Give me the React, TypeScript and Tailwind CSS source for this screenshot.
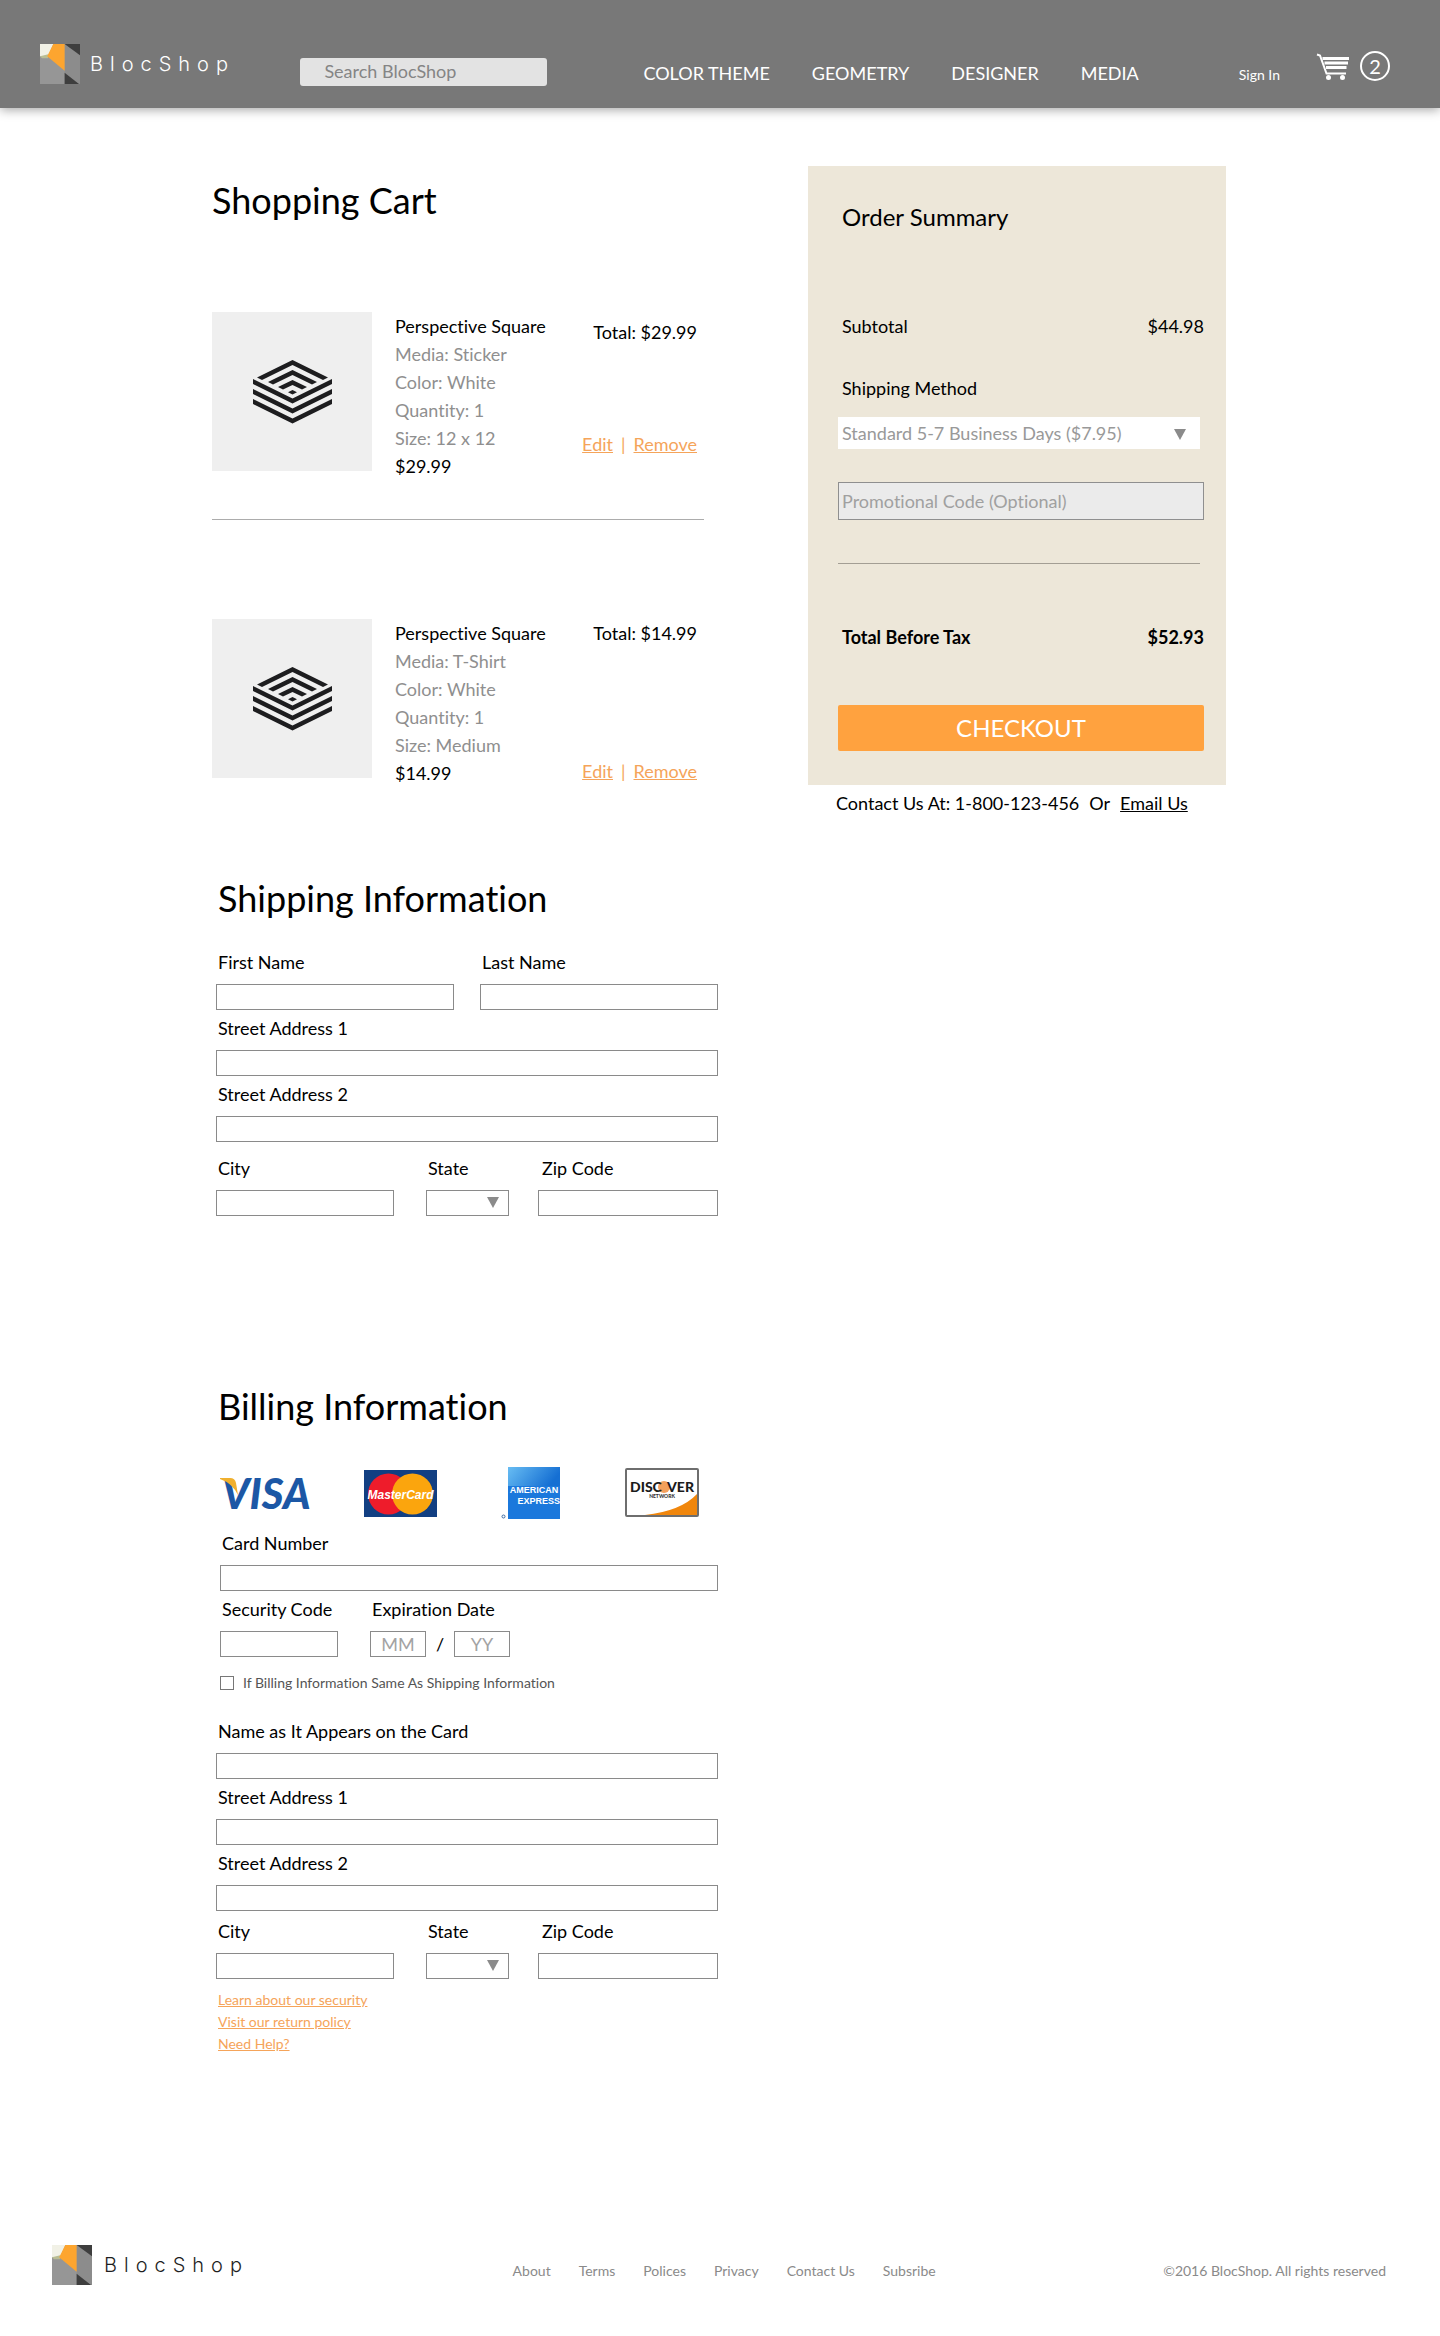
import type { ReactNode } from "react";

const fieldBox =
  "block h-[26px] w-full min-w-0 border border-[#8a8a8a] bg-white px-1 text-[18px] text-black outline-none";

function LogoMark() {
  return (
    <svg viewBox="0 0 39 39" className="h-10 w-10 shrink-0" aria-hidden="true">
      <rect width="39" height="39" fill="#969696" />
      <rect x="24" width="15" height="39" fill="#8c8c8c" />
      <polygon points="0,0 13,0 8,12 0,12" fill="#f1f1e6" />
      <polygon points="0,12 8,10 8,14 2,14" fill="#b9bd94" />
      <polygon points="13,0 24,0 24,26 7,12" fill="#fda52f" />
      <polygon points="24,0 39,0 39,11" fill="#3e3e3e" />
      <polygon points="24,28 38,39 24,39" fill="#3e3e3e" />
    </svg>
  );
}

function CartIcon() {
  return (
    <svg viewBox="0 0 34 27" className="h-[27px] w-[34px]" fill="none" aria-hidden="true">
      <path d="M1 1.5 L4 2.5 L10.5 20.5 H30" stroke="#fff" strokeWidth="2" />
      <path d="M6.500 5.500H33M8.500 10H32M10 14.500H30.500" stroke="#fff" strokeWidth="3" />
      <circle cx="12.500" cy="24.500" r="2.500" fill="#fff" />
      <circle cx="26.500" cy="24.500" r="2.500" fill="#fff" />
    </svg>
  );
}

function PerspectiveSquare() {
  return (
    <svg viewBox="0 0 79 64" className="h-16 w-[79px]" fill="#1d1d1f" aria-hidden="true">
      <polygon points="39.5,0 75,17.5 70,20 39.5,5 9,20 4,17.5" />
      <polygon points="39.5,10 64,22 59,24.5 39.5,15 20,24.5 15,22" />
      <polygon points="39.5,20 54,27 49,29.5 39.5,25 30,29.5 25,27" />
      <polygon points="39.5,30 44,32.3 39.5,34.6 35,32.3" />
      <polygon points="0,19 39.5,38.5 79,19 79,24 39.5,43.5 0,24" />
      <polygon points="0,29 39.5,48.5 79,29 79,34 39.5,53.5 0,34" />
      <polygon points="0,39 39.5,58.5 79,39 79,44 39.5,63.5 0,44" />
    </svg>
  );
}

function Arrow({ className }: { className: string }) {
  return (
    <svg viewBox="0 0 12 11" className={`pointer-events-none absolute h-[11px] w-3 ${className}`} aria-hidden="true">
      <polygon points="0,0 12,0 6,11" fill="#8b8b8b" />
    </svg>
  );
}

function CartItem(props: {
  media: string;
  size: string;
  price: string;
  rowClass: string;
  sideClass: string;
}) {
  return (
    <li className={`flex w-full max-w-[492px] ${props.rowClass}`}>
      <div className="flex h-[159px] w-40 shrink-0 items-center justify-center bg-[#efefef]">
        <PerspectiveSquare />
      </div>
      <div className="ml-[23px] flex-1 text-[#8f8f8f]">
        <h3 className="text-black">Perspective Square</h3>
        <p>Media: {props.media}</p>
        <p>Color: White</p>
        <p>Quantity: 1</p>
        <p>Size: {props.size}</p>
        <p className="text-black">{props.price}</p>
      </div>
      <div className={`mr-[7px] flex flex-col items-end justify-between ${props.sideClass}`}>
        <p>Total: {props.price}</p>
        <p className="flex gap-2 text-[#f5a45a]">
          <a href="#edit" className="underline">Edit</a>
          <span>|</span>
          <a href="#remove" className="underline">Remove</a>
        </p>
      </div>
    </li>
  );
}

function Field({ id, label, className = "" }: { id: string; label: string; className?: string }) {
  return (
    <div className={`flex flex-col gap-2 ${className}`}>
      <label htmlFor={id} className="pl-0.5">{label}</label>
      <input id={id} type="text" className={fieldBox} />
    </div>
  );
}

function CityRow({ prefix, className }: { prefix: string; className: string }) {
  return (
    <div className={`flex ${className}`}>
      <Field id={`${prefix}-city`} label="City" className="mr-8 w-[178px]" />
      <div className="mr-[29px] flex w-[83px] flex-col gap-2">
        <label htmlFor={`${prefix}-state`} className="pl-0.5">State</label>
        <div className="relative">
          <select id={`${prefix}-state`} className={`${fieldBox} appearance-none`}>
            <option value=""></option>
            <option>CA</option>
            <option>NY</option>
          </select>
          <Arrow className="right-2.5 top-[7px]" />
        </div>
      </div>
      <div className="flex flex-1 flex-col gap-2">
        <label htmlFor={`${prefix}-zip`} className="pl-1">Zip Code</label>
        <input id={`${prefix}-zip`} type="text" className={fieldBox} />
      </div>
    </div>
  );
}

function Visa() {
  return (
    <svg viewBox="0 0 98 52" className="h-[52px] w-[98px] shrink-0" role="img" aria-label="Visa">
      <text x="2" y="42" fontFamily="Lato, sans-serif" fontSize="42" fontWeight="900" fontStyle="italic" fill="#1c57a5">VISA</text>
      <path d="M0 11 H10 Q15 11 16 16 L18 28 Q12 16 0 12 Z" fill="#f0b02e" />
    </svg>
  );
}

function MasterCard() {
  return (
    <svg viewBox="0 0 73 52" className="h-[52px] w-[73px] shrink-0" role="img" aria-label="MasterCard">
      <rect y="3" width="73" height="47" fill="#123f82" />
      <circle cx="24.500" cy="27" r="20.500" fill="#ee1c2b" />
      <circle cx="48.500" cy="27" r="20.500" fill="#fba50d" />
      <text x="36.500" y="32" textAnchor="middle" fontFamily="Liberation Sans, sans-serif" fontSize="12" fontWeight="700" fontStyle="italic" fill="#fff">MasterCard</text>
    </svg>
  );
}

function Amex() {
  return (
    <svg viewBox="0 0 60 52" className="h-[52px] w-[60px] shrink-0" role="img" aria-label="American Express">
      <defs>
        <linearGradient id="amex-fill" x1="0" y1="0" x2="1" y2="0.3">
          <stop offset="0" stopColor="#68bdf3" />
          <stop offset="1" stopColor="#156fd3" />
        </linearGradient>
      </defs>
      <rect x="7" width="52" height="52" fill="#1b78dc" />
      <rect x="7" width="52" height="19" fill="url(#amex-fill)" />
      <text x="33" y="26" textAnchor="middle" fontFamily="Liberation Sans, sans-serif" fontSize="9" fontWeight="700" fill="#fff">AMERICAN</text>
      <text x="59" y="37" textAnchor="end" fontFamily="Liberation Sans, sans-serif" fontSize="9" fontWeight="700" fill="#fff">EXPRESS</text>
      <circle cx="2.500" cy="49.500" r="1.500" fill="none" stroke="#3c6aa0" />
    </svg>
  );
}

function Discover() {
  return (
    <svg viewBox="0 0 74 52" className="h-[52px] w-[74px] shrink-0" role="img" aria-label="Discover Network">
      <rect x="1" y="2" width="72" height="47" rx="1" fill="#fff" stroke="#6e6e6e" strokeWidth="2" />
      <path d="M20 48 Q56 44 72 27 V48 Z" fill="#f0860c" />
      <circle cx="39" cy="20" r="6" fill="#f3a05c" />
      <text x="5" y="25" fontFamily="Lato, sans-serif" fontSize="14" fontWeight="900" fill="#1b1b1b">DISC</text>
      <text x="69" y="25" textAnchor="end" fontFamily="Lato, sans-serif" fontSize="14" fontWeight="900" fill="#1b1b1b">VER</text>
      <text x="37" y="31" textAnchor="middle" fontFamily="Lato, sans-serif" fontSize="5" fontWeight="900" fill="#333">NETWORK</text>
    </svg>
  );
}

function SectionTitle({ children, className = "" }: { children: ReactNode; className?: string }) {
  return <h2 className={`pl-1.5 text-[36px] leading-[44px] ${className}`}>{children}</h2>;
}

export default function App() {
  return (
    <div className="min-h-screen bg-white font-['Lato',sans-serif] text-[18px] leading-7 text-black [font-variant-ligatures:none]">
      <header className="flex h-[108px] items-center bg-[#787878] pl-10 pr-[50px] pt-5 text-white shadow-[0_2px_10px_rgba(0,0,0,0.35)]">
        <a href="#home" className="flex items-center gap-2.5">
          <LogoMark />
          <span className="font-['Inter',sans-serif] text-[20px] font-light tracking-[7px]">BlocShop</span>
        </a>
        <input
          type="search"
          aria-label="Search BlocShop"
          placeholder="Search BlocShop"
          className="ml-auto mt-4 h-7 w-[247px] rounded-[3px] bg-[#e3e3e3] pb-0.5 pl-6 text-[18px] leading-[26px] text-black outline-none placeholder:text-[#858585]"
        />
        <nav className="ml-24 mt-[18px] flex gap-[42px]">
          <a href="#color">COLOR THEME</a>
          <a href="#geometry">GEOMETRY</a>
          <a href="#designer">DESIGNER</a>
          <a href="#media">MEDIA</a>
        </nav>
        <a href="#sign-in" className="ml-[100px] mt-[22px] text-[14px]">Sign In</a>
        <a href="#cart" aria-label="Cart, 2 items" className="ml-9 mt-1 flex items-center gap-2.5">
          <CartIcon />
          <span className="flex h-[30px] w-[30px] items-center justify-center rounded-full border-2 border-white text-[20px]">2</span>
        </a>
      </header>

      <main className="mx-auto flex max-w-[1016px] items-start gap-[90px] pt-[58px]">
        <div className="w-full max-w-[506px]">
          <h1 className="mt-3 text-[36px] leading-[44px]">Shopping Cart</h1>
          <ul className="mt-[90px]">
            <CartItem media="Sticker" size="12 x 12" price="$29.99" rowClass="border-b border-[#acacac] pb-[39px]" sideClass="pt-1.5 pb-[22px]" />
            <CartItem media="T-Shirt" size="Medium" price="$14.99" rowClass="pt-[99px]" sideClass="pb-0.5" />
          </ul>

          <form>
            <SectionTitle className="mt-[89px]">Shipping Information</SectionTitle>
            <div className="mt-7 flex flex-col gap-1 pl-1">
              <div className="flex gap-[26px]">
                <Field id="first-name" label="First Name" className="flex-1" />
                <Field id="last-name" label="Last Name" className="flex-1" />
              </div>
              <Field id="ship-street-1" label="Street Address 1" />
              <Field id="ship-street-2" label="Street Address 2" />
              <CityRow prefix="ship" className="mt-2" />
            </div>

            <SectionTitle className="mt-[168px]">Billing Information</SectionTitle>
            <div className="mt-[39px] flex gap-16 pl-2">
              <div className="flex gap-[46px]">
                <Visa />
                <MasterCard />
              </div>
              <Amex />
              <Discover />
            </div>
            <div className="mt-2.5 flex flex-col gap-1 pl-2">
              <Field id="card-number" label="Card Number" />
              <div className="flex">
                <Field id="security-code" label="Security Code" className="mr-8 w-[118px]" />
                <div className="flex flex-col gap-2">
                  <label htmlFor="exp-month" className="pl-0.5">Expiration Date</label>
                  <div className="flex h-[26px] items-center">
                    <input id="exp-month" type="text" placeholder="MM" className="h-[26px] w-14 border border-[#8a8a8a] text-center placeholder:text-[#a3a3a3]" />
                    <span className="w-7 text-center">/</span>
                    <input aria-label="Expiration year" type="text" placeholder="YY" className="h-[26px] w-14 border border-[#8a8a8a] text-center placeholder:text-[#a3a3a3]" />
                  </div>
                </div>
              </div>
            </div>
            <label className="mt-4 flex h-5 items-center gap-[9px] pl-2 text-[14px] leading-5 text-[#555]">
              <input type="checkbox" className="h-3.5 w-3.5 appearance-none border border-[#777] bg-white checked:bg-[#777]" />
              If Billing Information Same As Shipping Information
            </label>
            <div className="mt-6 flex flex-col gap-1 pl-1">
              <Field id="card-name" label="Name as It Appears on the Card" />
              <Field id="bill-street-1" label="Street Address 1" />
              <Field id="bill-street-2" label="Street Address 2" />
              <CityRow prefix="bill" className="mt-0.5" />
            </div>
          </form>
          <ul className="mt-2.5 pl-1.5 text-[14px] leading-[22px] text-[#f5a45a]">
            <li><a href="#security" className="underline">Learn about our security</a></li>
            <li><a href="#returns" className="underline">Visit our return policy</a></li>
            <li><a href="#help" className="underline">Need Help?</a></li>
          </ul>
        </div>

        <aside className="w-[418px] shrink-0">
          <div className="bg-[#ede7d9] pb-[34px] pl-[30px] pr-[22px] pt-[35px]">
            <h2 className="pl-1 text-[24px] leading-8">Order Summary</h2>
            <p className="mt-[79px] flex justify-between pl-1"><span>Subtotal</span><span>$44.98</span></p>
            <label htmlFor="shipping-method" className="mt-[34px] block pl-1">Shipping Method</label>
            <div className="relative mr-1 mt-[15px]">
              <select id="shipping-method" className="block h-8 w-full appearance-none bg-white pl-1 text-[#999] outline-none">
                <option>Standard 5-7 Business Days ($7.95)</option>
              </select>
              <Arrow className="right-3.5 top-3" />
            </div>
            <input
              type="text"
              aria-label="Promotional Code"
              placeholder="Promotional Code (Optional)"
              className="mt-[33px] block h-[38px] w-full border border-[#8f8f8f] bg-[#ebebeb] pl-[3px] outline-none placeholder:text-[#a0a0a0]"
            />
            <hr className="mr-1 mt-[43px] border-[#a39e94]" />
            <p className="mt-[59px] flex justify-between pl-1 font-bold"><span>Total Before Tax</span><span>$52.93</span></p>
            <button type="button" className="mt-[54px] block h-[46px] w-full rounded-[2px] bg-[#ffa23f] text-[24px] text-white">CHECKOUT</button>
          </div>
          <p className="mt-1 flex gap-2.5 pl-7">
            <span>Contact Us At: 1-800-123-456</span>
            <span>Or</span>
            <a href="#email" className="underline">Email Us</a>
          </p>
        </aside>
      </main>

      <footer className="mt-[190px] flex items-center justify-between pb-[50px] pl-[52px] pr-[54px] text-[14px] text-[#8a8a8a]">
        <a href="#home" className="flex items-center gap-3 text-[#1f1f1f]">
          <LogoMark />
          <span className="font-['Inter',sans-serif] text-[20px] font-light tracking-[7px]">BlocShop</span>
        </a>
        <nav className="mt-3 flex gap-7 pl-9">
          <a href="#about">About</a>
          <a href="#terms">Terms</a>
          <a href="#polices">Polices</a>
          <a href="#privacy">Privacy</a>
          <a href="#contact">Contact Us</a>
          <a href="#subscribe">Subsribe</a>
        </nav>
        <p className="mt-3">©2016 BlocShop. All rights reserved</p>
      </footer>
    </div>
  );
}
